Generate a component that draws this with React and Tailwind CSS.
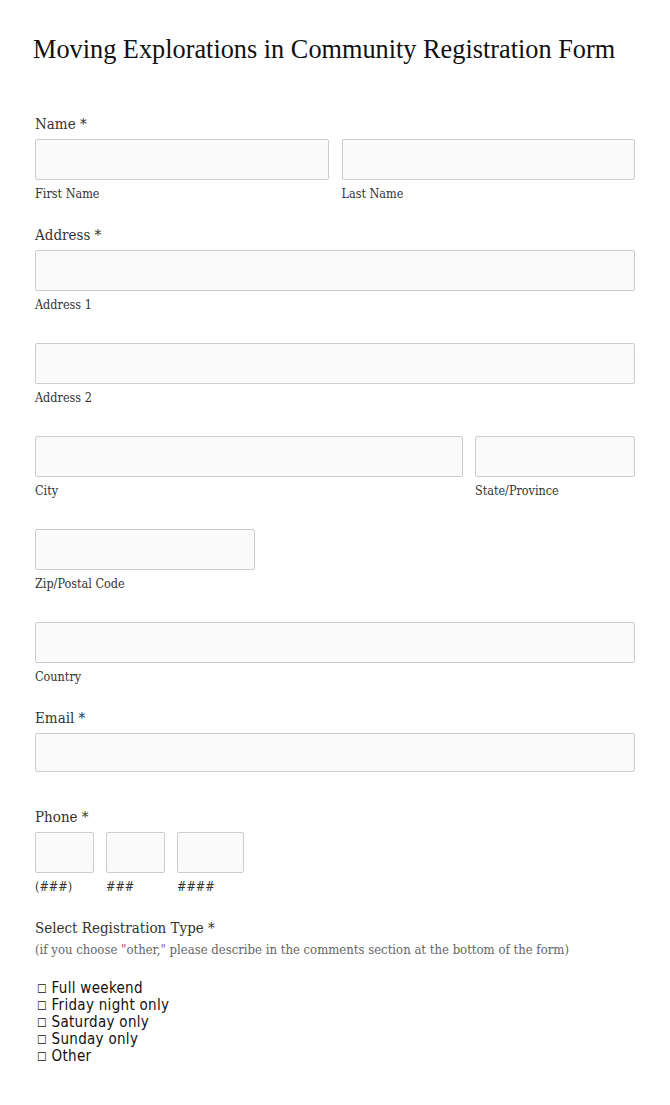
const serif = { fontFamily: '"DejaVu Serif Condensed", "DejaVu Serif", serif', fontStretch: 'condensed' }
const titleFont = { fontFamily: '"Liberation Serif", serif' }

function Box({ className = '' }) {
  return <input type="text" className={`block h-[41px] rounded-[2px] border border-[#cccccc] bg-[#fafafa] ${className}`} />
}

function Sub({ children, className = '' }) {
  return <div className={`mt-[5px] text-[12.5px] leading-[18px] text-[#333333] ${className}`}>{children}</div>
}

function Label({ children, className = '' }) {
  return <div className={`text-[15px] leading-[22px] text-[#333333] ${className}`}>{children}</div>
}

export default function App() {
  return (
    <div className="min-h-screen bg-white px-[35px] pb-10 text-[#222222]" style={serif}>
      <h1 className="ml-[-2px] pt-[34px] text-[26.3px] leading-[32px] text-[#111111]" style={titleFont}>
        Moving Explorations in Community Registration Form
      </h1>

      <Label className="mt-[47px]">Name *</Label>
      <div className="mt-[4px] grid grid-cols-2 gap-[13px]">
        <div>
          <Box className="w-full" />
          <Sub>First Name</Sub>
        </div>
        <div>
          <Box className="w-full" />
          <Sub>Last Name</Sub>
        </div>
      </div>

      <Label className="mt-[21px]">Address *</Label>
      <Box className="mt-[4px] w-full" />
      <Sub>Address 1</Sub>

      <Box className="mt-[29px] w-full" />
      <Sub>Address 2</Sub>

      <div className="mt-[29px] flex gap-[12px]">
        <div className="w-[428px]">
          <Box className="w-full" />
          <Sub>City</Sub>
        </div>
        <div className="flex-1">
          <Box className="w-full" />
          <Sub>State/Province</Sub>
        </div>
      </div>

      <Box className="mt-[29px] w-[220px]" />
      <Sub>Zip/Postal Code</Sub>

      <Box className="mt-[29px] w-full" />
      <Sub>Country</Sub>

      <Label className="mt-[21px]">Email *</Label>
      <input type="email" className="mt-[4px] block h-[39px] w-full rounded-[2px] border border-[#cccccc] bg-[#fafafa]" />

      <Label className="mt-[34px]">Phone *</Label>
      <div className="mt-[4px] flex gap-[12px]">
        <div>
          <Box className="w-[59px]" />
          <Sub>(###)</Sub>
        </div>
        <div>
          <Box className="w-[59px]" />
          <Sub>###</Sub>
        </div>
        <div>
          <Box className="w-[67px]" />
          <Sub>####</Sub>
        </div>
      </div>

      <Label className="mt-[21px]">Select Registration Type *</Label>
      <div className="mt-[2px] text-[13px] leading-[18px] text-[#666666]">
        (if you choose "other," please describe in the comments section at the bottom of the form)
      </div>

      <ul className="mt-[21px] text-[15px] leading-[17px] tracking-[0.3px] text-[#111111]" style={{ fontFamily: '"DejaVu Sans", sans-serif' }}>
        {['Full weekend', 'Friday night only', 'Saturday only', 'Sunday only', 'Other'].map((t) => (
          <li key={t} className="ml-[2px]">
            <span className="text-[12px] leading-none">☐</span> {t}
          </li>
        ))}
      </ul>
    </div>
  )
}
